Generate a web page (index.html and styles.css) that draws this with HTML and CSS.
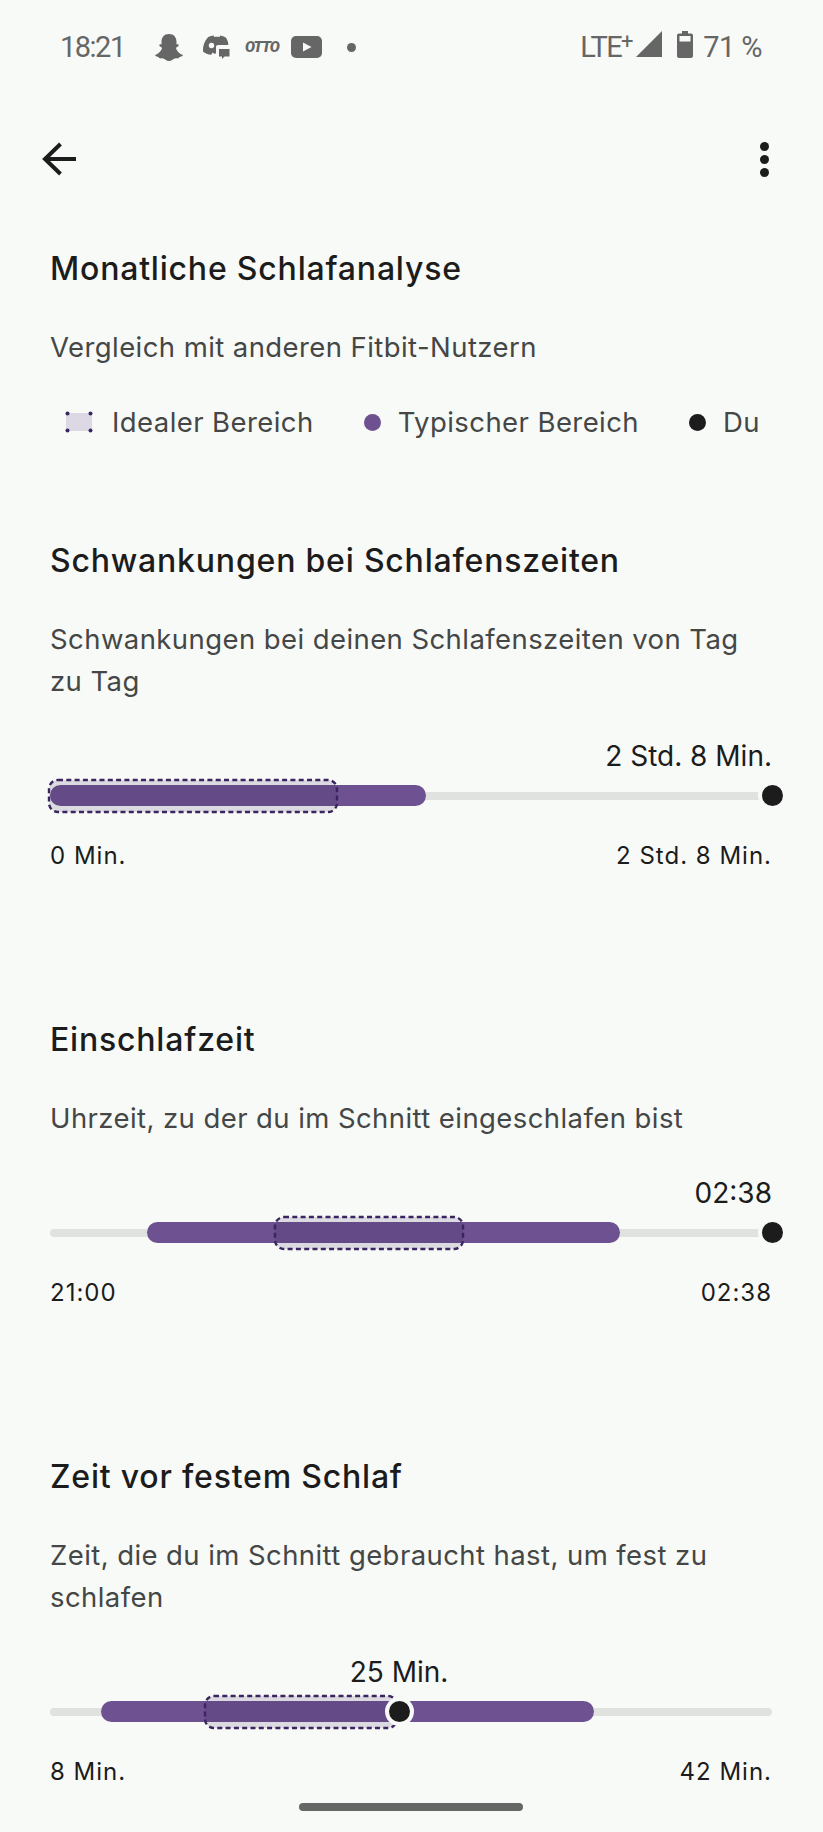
FILE: index.html
```html
<!DOCTYPE html>
<html>

<head>
  <meta charset="utf-8">
  <meta name="viewport" content="width=device-width">
  <title>Monatliche Schlafanalyse</title>
  <link rel="stylesheet" href="styles.css">
</head>
<body>
  <div class="status">
    <span class="time">18:21</span>
    <svg class="ic-ghost" width="28" height="27" viewBox="0 0 28 27"><path d="M14 0C9 0 6.500 3.500 6.500 8v2.500C5 10 3.800 10.800 4.500 12c.5 1 2.500 1 2.500 2-.5 3-4 6-7 7 .5 1.500 3 1.500 4 2.500.5 1.500 2 .5 4 1s3.500 2.500 6 2.500 4-2 6-2.500 3.500.5 4-1c1-1 3.500-1 4-2.500-3-1-6.500-4-7-7 0-1 2-1 2.500-2 .7-1.200-.5-2-2-1.500V8C21.500 3.500 19 0 14 0z"/></svg>
    <svg class="ic-discord" width="28" height="24" viewBox="0 0 28 24"><path d="M6 2.200C8 1.200 10 .8 11.500.6l.8 1.400c1.800-.2 3.400-.2 5.200 0l.8-1.400c2 .3 3.800.9 5.400 1.900 1.300 1.700 2.100 3.500 2.500 5.500v2H16c-1.200 0-2 .8-2 2V18l-1 1-2.500-1.500-1.200 2.300C6 19.500 3 18.500 1 16.500.6 11 2.500 6 6 2.200z"/><circle class="cut" cx="9.500" cy="10.500" r="2.700"/><path d="M17 14h10.500v7.500h-5l-2.500 2.500v-2.500h-3z"/></svg>
    <span class="otto">OTTO</span>
    <svg class="ic-yt" width="31" height="22" viewBox="0 0 31 22"><rect width="31" height="22" rx="5"/><path class="cut" d="M12 6.500l8.500 4.500-8.500 4.500z"/></svg>
    <span class="more-dot"></span>
    <span class="status-right">
      <span class="lte">LTE<sup>+</sup></span>
      <svg class="ic-signal" width="26" height="26" viewBox="0 0 26 26"><path d="M26 0v26H0z"/></svg>
      <svg class="ic-batt" width="16" height="27" viewBox="0 0 16 27"><path d="M5 0h6v2.500h3c1.100 0 2 .9 2 2V25c0 1.100-.9 2-2 2H2c-1.100 0-2-.9-2-2V4.500c0-1.100.9-2 2-2h3z"/><rect class="cut" x="2.500" y="5" width="11" height="5.500"/></svg>
      <span class="batt">71 %</span>
    </span>
  </div>

  <div class="toolbar">
    <svg width="34" height="34" viewBox="0 0 34 34" fill="none" stroke="#1b1c1b" stroke-width="4"><path d="M34 17H4M18.500 2L3 17l15.500 15"/></svg>
    <span class="kebab"><i></i><i></i><i></i></span>
  </div>

  <main class="content">
    <h1>Monatliche Schlafanalyse</h1>
    <p class="desc">Vergleich mit anderen Fitbit-Nutzern</p>
    <div class="legend">
      <span class="legend-item">
        <svg class="legend-ideal" width="28" height="22" viewBox="0 0 28 22"><rect x="1" y="2" width="26" height="18" fill="#dcd8e4"/><circle cx="2.500" cy="2.500" r="2"/><circle cx="25.500" cy="2.500" r="2"/><circle cx="2.500" cy="19.500" r="2"/><circle cx="25.500" cy="19.500" r="2"/></svg>
        Idealer Bereich
      </span>
      <span class="legend-item"><span class="dot purple"></span>Typischer Bereich</span>
      <span class="legend-item"><span class="dot black"></span>Du</span>
    </div>

    <section class="metric">
      <h2>Schwankungen bei Schlafenszeiten</h2>
      <p class="desc">Schwankungen bei deinen Schlafenszeiten von Tag zu Tag</p>
      <div class="value">2 Std. 8 Min.</div>
      <div class="chart">
        <div class="track"></div>
        <div class="range" style="left:0;width:376px"></div>
        <svg class="ideal" style="left:-2px;width:290px" height="34"><rect x="1" y="1" width="288" height="32" rx="9"/></svg>
        <div class="you" style="left:722px"></div>
      </div>
      <div class="ends"><span>0 Min.</span><span>2 Std. 8 Min.</span></div>
    </section>

    <section class="metric">
      <h2>Einschlafzeit</h2>
      <p class="desc">Uhrzeit, zu der du im Schnitt eingeschlafen bist</p>
      <div class="value">02:38</div>
      <div class="chart">
        <div class="track"></div>
        <div class="range" style="left:97px;width:473px"></div>
        <svg class="ideal" style="left:224px;width:190px" height="34"><rect x="1" y="1" width="188" height="32" rx="9"/></svg>
        <div class="you" style="left:722px"></div>
      </div>
      <div class="ends"><span>21:00</span><span>02:38</span></div>
    </section>

    <section class="metric">
      <h2>Zeit vor festem Schlaf</h2>
      <p class="desc">Zeit, die du im Schnitt gebraucht hast, um fest zu schlafen</p>
      <div class="value value-mid" style="width:698px">25 Min.</div>
      <div class="chart">
        <div class="track"></div>
        <div class="range" style="left:51px;width:493px"></div>
        <svg class="ideal" style="left:154px;width:194px" height="34"><rect x="1" y="1" width="192" height="32" rx="9"/></svg>
        <div class="you" style="left:349px"></div>
      </div>
      <div class="ends"><span>8 Min.</span><span>42 Min.</span></div>
    </section>
  </main>

  <div class="home"></div>
</body>
</html>
```

FILE: styles.css
```css
html, body { margin: 0; padding: 0; }
body { position: relative; height: 1832px; overflow: hidden; background: #f8faf8; color: #1b1c1b; font-family: Inter, Roboto, sans-serif; }

.status { display: flex; align-items: center; height: 94px; padding: 0 61px 0 60px; box-sizing: border-box; color: #666; fill: #666; font-family: Roboto, sans-serif; font-size: 29px; }
.status svg { display: block; flex: none; }
.status .cut { fill: #f8faf8; }
.time { width: 64px; margin-right: 31px; letter-spacing: -1.5px; white-space: nowrap; }
.ic-discord { margin-left: 19px; }
.otto { width: 32px; margin-left: 15px; font-size: 15px; font-weight: 900; font-style: italic; letter-spacing: -1px; }
.ic-yt { margin-left: 14px; }
.more-dot { width: 9px; height: 9px; margin-left: 25px; border-radius: 50%; background: #666; }
.status-right { display: flex; align-items: center; margin-left: auto; }
.lte { width: 51px; letter-spacing: -1.6px; white-space: nowrap; }
.lte sup { font-size: 22px; line-height: 0; vertical-align: 8px; }
.ic-signal { margin-left: 5px; margin-top: -6px; }
.ic-batt { margin-left: 15px; margin-top: -6px; }
.batt { margin-left: 10px; letter-spacing: -.6px; white-space: nowrap; }

.toolbar { display: flex; align-items: center; justify-content: space-between; height: 130px; padding: 0 54px 0 42px; }
.toolbar svg { display: block; }
.kebab { display: flex; flex-direction: column; gap: 4px; }
.kebab i { width: 9px; height: 9px; border-radius: 50%; background: #1b1c1b; }

.content { padding: 22px 51px 0 50px; }
h1, h2 { margin: 0 0 -1px; padding-top: 1px; font-size: 32px; line-height: 44px; font-weight: 500; letter-spacing: .8px; }
.desc { margin: 36px 0 0; font-size: 27.5px; line-height: 42px; letter-spacing: .42px; color: #444746; }

.legend { display: flex; justify-content: space-between; align-items: center; height: 42px; margin-top: 33px; padding: 0 12px 0 15px; font-size: 27.5px; letter-spacing: .42px; color: #444746; }
.legend-item { display: flex; align-items: center; }
.legend-ideal { margin-right: 19px; fill: #3a2560; }
.dot { width: 17px; height: 17px; margin-right: 17px; border-radius: 50%; }
.dot.purple { background: #6d5190; }
.dot.black { background: #1b1c1b; }

.metric { margin-top: 145px; }
.metric:first-of-type { margin-top: 95px; }
.value { margin: 35px 0 -1px; padding-top: 1px; font-size: 28px; line-height: 36px; font-weight: 400; text-align: right; }
.value-mid { text-align: center; }
.chart { position: relative; height: 34px; margin-top: 6px; }
.track { position: absolute; left: 0; right: 0; top: 13px; height: 8px; border-radius: 4px; background: #e0e2e0; }
.range { position: absolute; top: 6px; height: 21px; border-radius: 11px; background: #6d5190; }
.ideal { position: absolute; top: 0; display: block; overflow: visible; }
.ideal rect { fill: rgba(58, 37, 96, .15); stroke: #3a2560; stroke-width: 2.4; stroke-dasharray: 5 3.3; }
.you { position: absolute; top: 6px; width: 21px; height: 21px; margin-left: -10.5px; border-radius: 50%; background: #1b1c1b; box-shadow: 0 0 0 4px #f8faf8; }
.ends { display: flex; justify-content: space-between; margin-top: 27px; font-size: 24px; line-height: 32px; letter-spacing: 1px; }

.home { position: absolute; left: 299px; bottom: 21px; width: 224px; height: 8px; border-radius: 4px; background: #666; }
```
